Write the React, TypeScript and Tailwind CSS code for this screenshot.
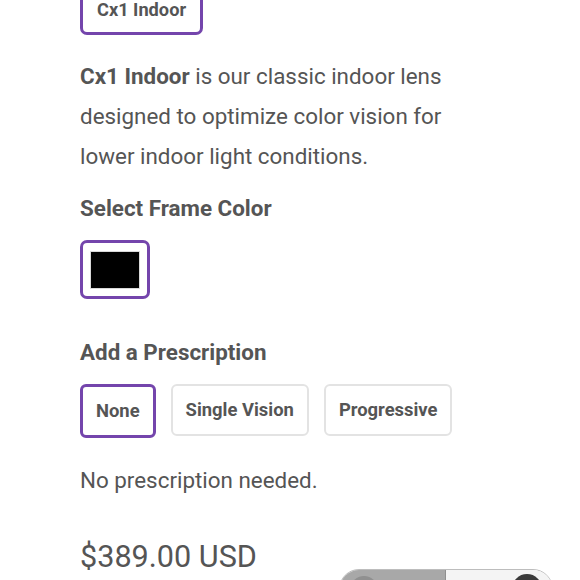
import React, { useState } from 'react'

const RX = [
  { id: 'none', label: 'None', note: 'No prescription needed.' },
  { id: 'single', label: 'Single Vision', note: 'Single vision prescription lenses.' },
  { id: 'prog', label: 'Progressive', note: 'Progressive prescription lenses.' },
]

export default function App() {
  const [rx, setRx] = useState('none')
  const current = RX.find(r => r.id === rx)!

  return (
    <div className="relative w-[580px] h-[580px] overflow-hidden bg-white text-[#555555]"
      style={{ fontFamily: 'Roboto, "Noto Sans", sans-serif' }}>
      <div className="pl-[80px] pr-6">
        {/* Lens */}
        <div className="-mt-[20px]">
          <button className="h-[55px] px-[14px] pt-[13px] rounded-[7px] border-[3px] border-[#7445ac] text-[18.2px] font-bold text-[#555555] bg-white flex items-start">
            Cx1 Indoor
          </button>
        </div>

        <p className="mt-[21px] text-[22.4px] leading-[40px] w-[400px]">
          <span className="font-bold">Cx1 Indoor</span> is our classic indoor lens designed to optimize color vision for lower indoor light conditions.
        </p>

        {/* Frame colour */}
        <h3 className="mt-[17px] text-[22.4px] font-bold leading-[30px]">Select Frame Color</h3>
        <div className="mt-[17px]">
          <button className="w-[70px] h-[59px] rounded-[7px] border-[3px] border-[#7445ac] flex items-center justify-center bg-white">
            <span className="block w-[50px] h-[38px] bg-black border border-[#d8d8d8]" />
          </button>
        </div>

        {/* Prescription */}
        <h3 className="mt-[38px] text-[22.4px] font-bold leading-[30px]">Add a Prescription</h3>
        <div className="mt-[17px] flex gap-[15px] items-start">
          {RX.map(r => (
            <button key={r.id} onClick={() => setRx(r.id)}
              className={r.id === rx
                ? 'h-[54px] px-[13px] rounded-[6px] border-[3px] border-[#7445ac] text-[18.4px] font-bold text-[#555555] bg-white'
                : 'h-[52px] px-[13px] rounded-[6px] border-2 border-[#e3e3e3] text-[18.4px] font-bold text-[#555555] bg-white'}>
              {r.label}
            </button>
          ))}
        </div>

        <p className="mt-[27px] text-[22.4px] leading-[30px]">{current.note}</p>

        <div className="mt-[42px] text-[30.6px] leading-[40px]">$389.00 USD</div>
      </div>

      {/* floating toggle, cut off at bottom */}
      <div className="absolute left-[339px] top-[569px] w-[214px] h-[40px] rounded-[20px] border border-[#bdbdbd] overflow-hidden flex">
        <div className="w-[106px] h-full bg-[#a8a8a8] border-r border-[#8f8f8f] relative">
          <span className="absolute left-[10px] top-[6px] w-[28px] h-[28px] rounded-full bg-[#909090]" />
        </div>
        <div className="flex-1 h-full bg-[#f4f4f4] relative">
          <span className="absolute right-[10px] top-[4px] w-[30px] h-[30px] rounded-full bg-[#3a3a3a]" />
        </div>
      </div>
    </div>
  )
}
